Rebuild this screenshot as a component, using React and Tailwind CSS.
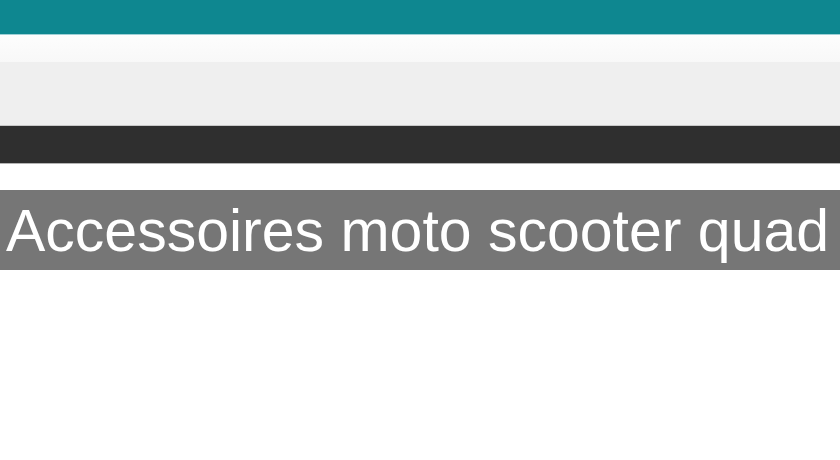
export default function App() {
  return (
    <div className="w-[840px] h-[460px] bg-white overflow-hidden" style={{ fontFamily: '"Liberation Sans", Arial, sans-serif' }}>
      {/* top band */}
      <div className="h-[34px] bg-[#0e8790]" />
      <div className="h-px bg-[#9fd0d6]" />
      <div className="h-[27px] bg-gradient-to-b from-[#fdfdfd] to-[#f8f8f8]" />

      {/* light strip */}
      <div className="h-[63px] bg-[#efefef]" />

      {/* dark nav */}
      <div className="h-px bg-[#c8c8c8]" />
      <div className="h-[37px] bg-[#2f2f2f]" />
      <div className="h-px bg-[#b4b4b4]" />

      <div className="h-[26px]" />

      {/* title */}
      <div className="h-[80px] bg-[#767676] pl-[6px] flex items-center">
        <h1 className="text-[59px] leading-[80px] pt-[2px] text-white whitespace-nowrap">
          Accessoires moto scooter quad
        </h1>
      </div>
    </div>
  );
}
